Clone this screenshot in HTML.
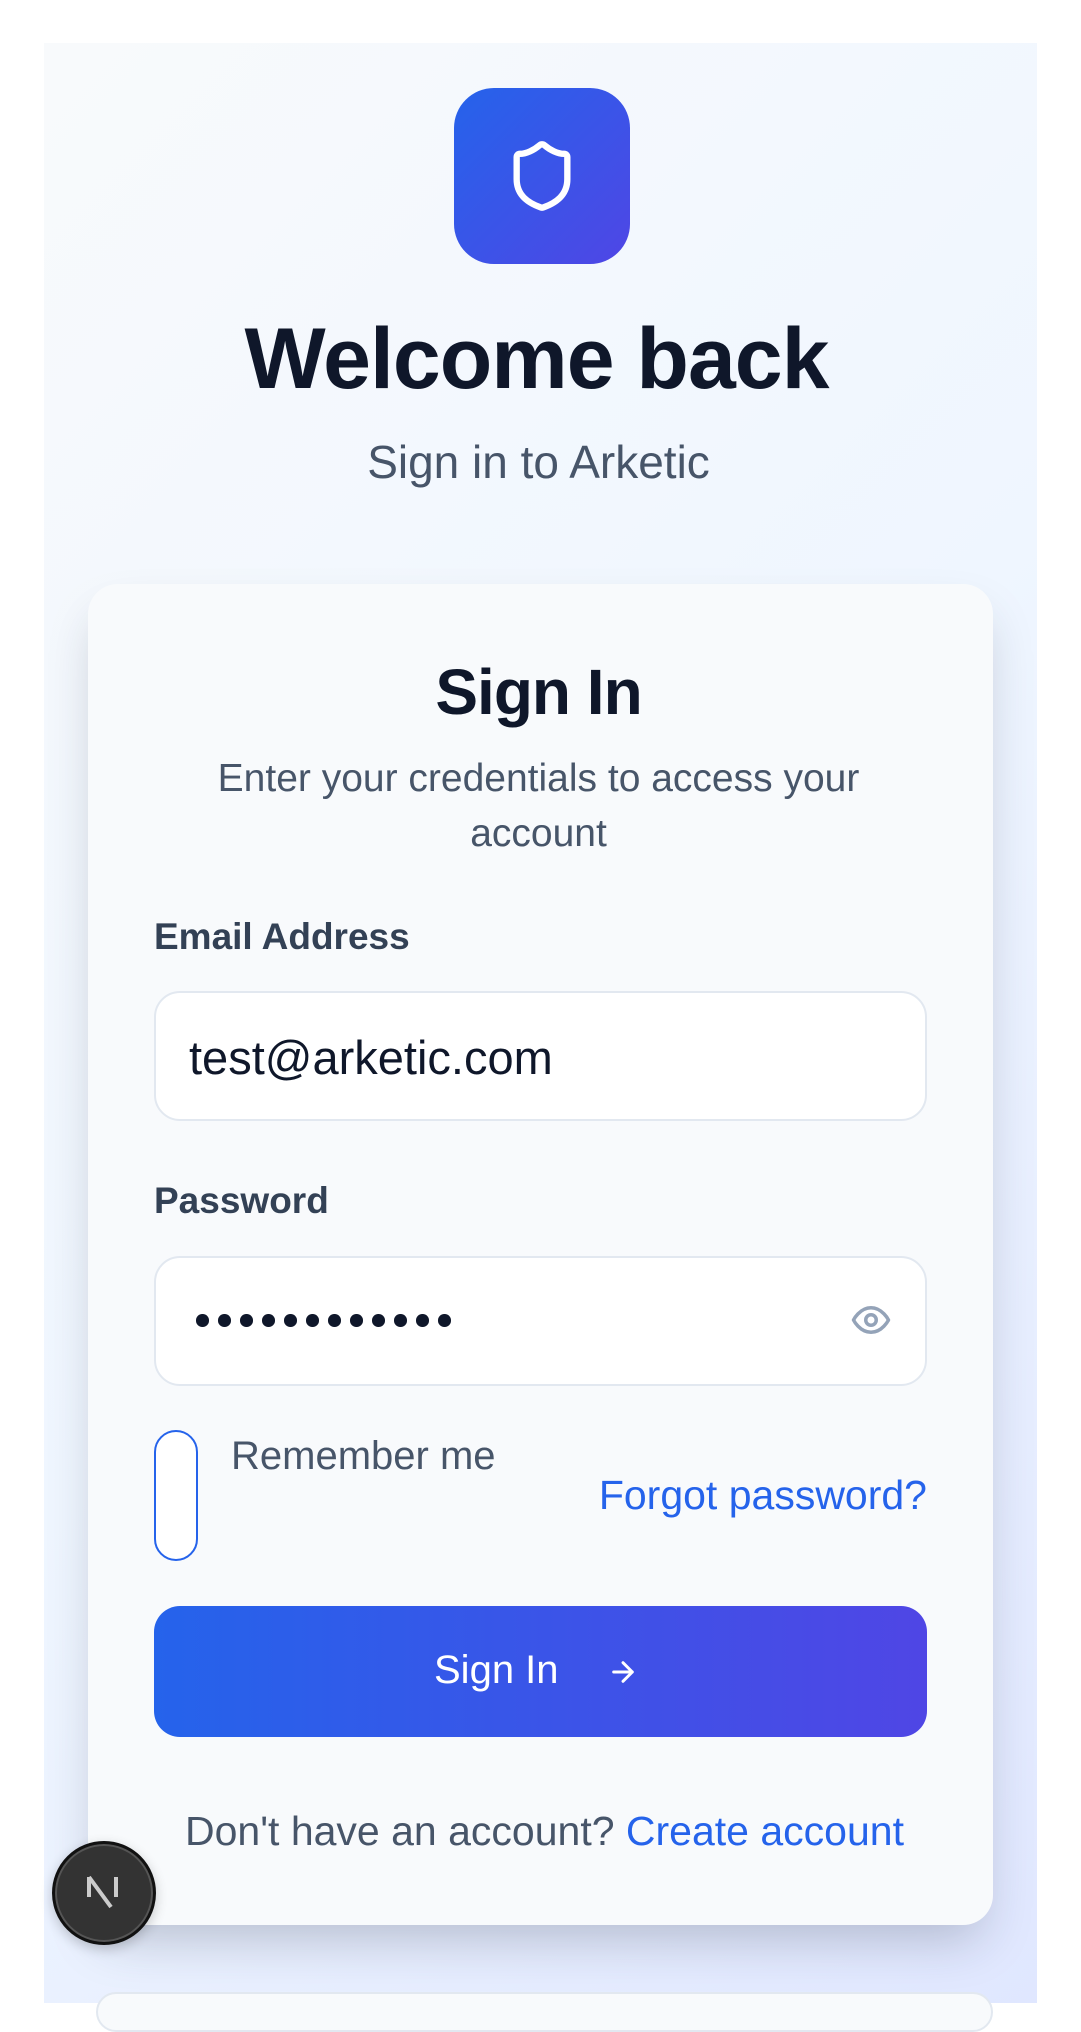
<!DOCTYPE html>
<html><head><meta charset="utf-8"><style>
*{box-sizing:border-box;margin:0;padding:0}
html,body{width:1081px;height:1999px;background:#fff;overflow:hidden;font-family:"Liberation Sans",sans-serif}
.wrap{position:absolute;left:44px;top:43px;width:993px;height:1960px;background:linear-gradient(135deg,#f8fafc 0%,#eff6ff 50%,#e0e7ff 100%)}
.logo{position:absolute;left:454px;top:88px;width:176px;height:176px;border-radius:40px;background:linear-gradient(135deg,#2563eb,#4f46e5)}
.logo svg{position:absolute;left:50px;top:50px}
.t{position:absolute;left:0;width:1081px;text-align:center}
.card{position:absolute;left:88px;top:584px;width:905px;height:1341px;border-radius:30px;background:#f8fafc;box-shadow:0 25px 50px -12px rgba(30,41,59,.25)}
.lbl{position:absolute;left:154px;font-size:37px;font-weight:bold;color:#334155}
.inp{position:absolute;left:154px;width:773px;height:130px;border:2px solid #e2e8f0;border-radius:26px;background:#fff}
.btn{position:absolute;left:154px;top:1606px;width:773px;height:131px;border-radius:26px;background:linear-gradient(90deg,#2563eb,#4f46e5)}
.dots{position:absolute;left:196px;top:1314px;display:flex;gap:9.5px}
.dots i{display:block;width:12.5px;height:12.5px;border-radius:50%;background:#0f172a}
</style></head><body>
<div class="wrap"></div>
<div class="logo"><svg width="76" height="76" viewBox="0 0 24 24" fill="none" stroke="#fff" stroke-width="2" stroke-linecap="round" stroke-linejoin="round"><path d="M20 13c0 5-3.5 7.5-7.66 8.95a1 1 0 0 1-.67-.01C7.5 20.5 4 18 4 13V6a1 1 0 0 1 1-1c2 0 4.5-1.2 6.24-2.72a1.17 1.17 0 0 1 1.52 0C14.51 3.81 17 5 19 5a1 1 0 0 1 1 1z"/></svg></div>
<div class="t" style="top:310px;font-size:86px;font-weight:bold;color:#0f172a;letter-spacing:-1px;left:-4px">Welcome back</div>
<div class="t" style="top:435px;font-size:46px;color:#475569;left:-2px">Sign in to Arketic</div>
<div class="card"></div>
<div class="t" style="top:655px;font-size:64px;font-weight:bold;color:#0f172a;letter-spacing:-1px;left:-2px">Sign In</div>
<div class="t" style="top:751px;font-size:39px;line-height:55px;color:#475569;left:-2px">Enter your credentials to access your<br>account</div>
<div class="lbl" style="top:916px">Email Address</div>
<div class="inp" style="top:991px"></div>
<div style="position:absolute;left:189px;top:1030px;font-size:47px;color:#0f172a">test@arketic.com</div>
<div class="lbl" style="top:1180px">Password</div>
<div class="inp" style="top:1256px"></div>
<div class="dots"><i></i><i></i><i></i><i></i><i></i><i></i><i></i><i></i><i></i><i></i><i></i><i></i></div>
<svg style="position:absolute;left:850px;top:1299px" width="42" height="42" viewBox="0 0 24 24" fill="none" stroke="#94a3b8" stroke-width="2" stroke-linecap="round" stroke-linejoin="round"><path d="M2 12s3.5-7 10-7 10 7 10 7-3.5 7-10 7S2 12 2 12z"/><circle cx="12" cy="12" r="3"/></svg>
<div style="position:absolute;left:154px;top:1430px;width:44px;height:131px;border:2px solid #2563eb;border-radius:22px;background:#fff"></div>
<div style="position:absolute;left:231px;top:1434px;font-size:40px;color:#475569">Remember me</div>
<div style="position:absolute;right:154px;top:1472px;font-size:41px;color:#2563eb">Forgot password?</div>
<div class="btn"></div>
<div style="position:absolute;left:434px;top:1648px;font-size:40px;color:#fff">Sign In</div>
<svg style="position:absolute;left:607px;top:1656px" width="32" height="32" viewBox="0 0 24 24" fill="none" stroke="#fff" stroke-width="2.2" stroke-linecap="round" stroke-linejoin="round"><path d="M5 12h14M12 5l7 7-7 7"/></svg>
<div class="t" style="top:1808px;font-size:41px;color:#475569;left:4px">Don't have an account? <span style="color:#2563eb">Create account</span></div>
<div style="position:absolute;left:96px;top:1992px;width:897px;height:40px;border:2px solid #e2e8f0;border-radius:30px;background:#f8fafc"></div>
<div style="position:absolute;left:52px;top:1841px;width:104px;height:104px;border-radius:50%;background:#333;border:3px solid #111;box-shadow:inset 0 0 0 2px #555,0 4px 12px rgba(0,0,0,.2)"></div>
<svg style="position:absolute;left:86px;top:1875px" width="36" height="36" viewBox="0 0 36 36"><path d="M3 2v20" stroke="#ccc" stroke-width="4"/><path d="M3 2l22 30" stroke="#ccc" stroke-width="4"/><path d="M30 2v20" stroke="#ccc" stroke-width="4"/></svg>
</body></html>
